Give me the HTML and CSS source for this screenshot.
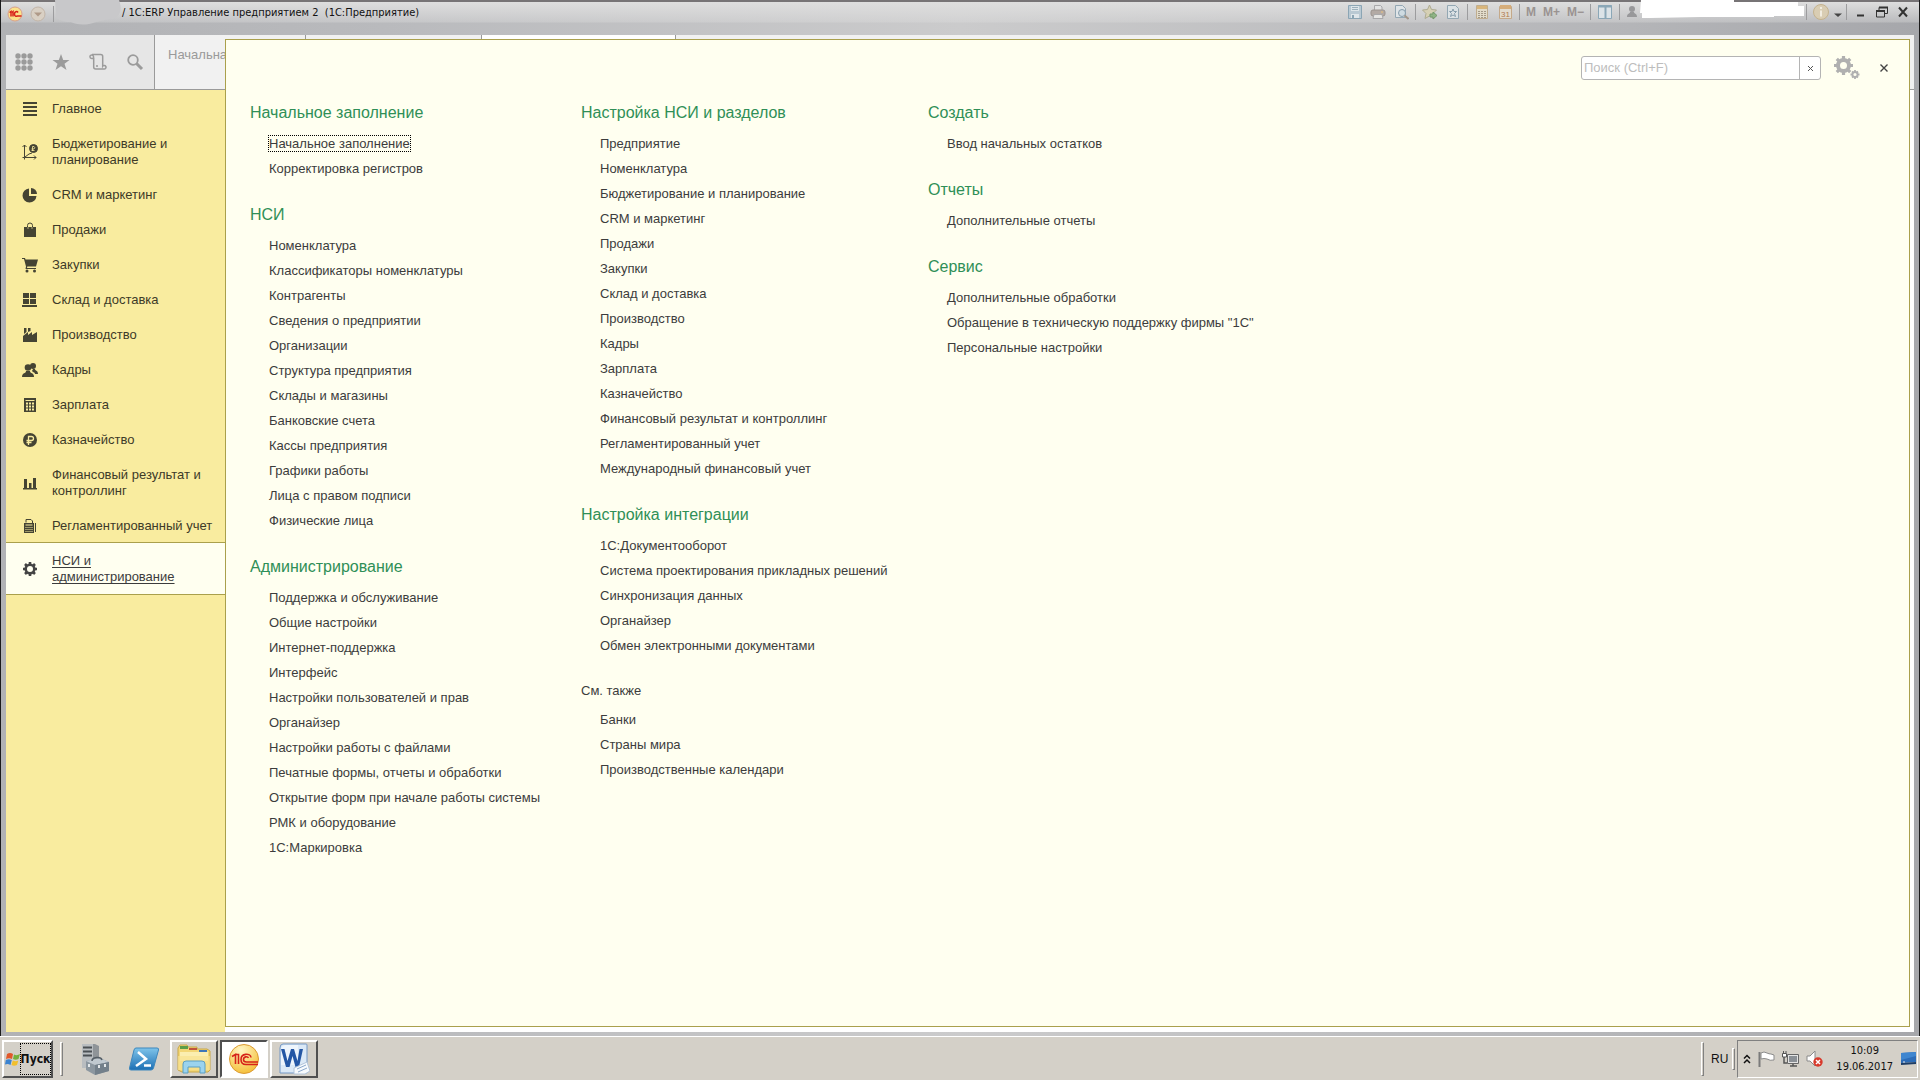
FILE: index.html
```html
<!DOCTYPE html>
<html lang="ru">
<head>
<meta charset="utf-8">
<title>1С:ERP Управление предприятием 2</title>
<link rel="stylesheet" href="styles.css">
</head>
<body>
<div class="window">
  <header class="titlebar">
    <button class="tb-btn" aria-label="Главное меню">
      <svg width="16" height="16" viewBox="0 0 16 16"><circle cx="8" cy="8" r="7" fill="#fbe28a" stroke="#d9a08a"/><path d="M2.500 6.500 4 5.500V10.500M6 10.500V5.500L4.800 6.500M11 6.500C10 4.800 7.500 5.500 7.500 8S9 10.500 10.500 10H14.500" fill="none" stroke="#d8241c" stroke-width="1.500"/></svg>
    </button>
    <button class="tb-btn tb-drop" aria-label="Меню">
      <svg width="16" height="16" viewBox="0 0 16 16"><circle cx="8" cy="8" r="7" fill="#d9d0c4" stroke="#c2b5a8"/><path d="M4 6.500h8L8 10.500z" fill="#b09a88"/></svg>
    </button>
    <span class="tb-sep"></span>
    <svg class="smudge" width="67" height="28" viewBox="0 0 67 28"><path d="M0 0H64C67 8 66 15 60 18 50 20 44 21 38 23 28 26 20 24 16 22 9 22 2 20 1 16z" fill="#c8c8ca"/></svg>
    <h1 class="title">/ 1С:ERP Управление предприятием 2&nbsp; (1С:Предприятие)</h1>
    <div class="tb-tools">
      <button class="tb-btn" aria-label="Сохранить"><svg width="16" height="16" viewBox="0 0 16 16"><path d="M1.500 1.500h13v13h-13z" fill="#b9c9d3" stroke="#8ba5b4"/><path d="M4 2h8v5H4z" fill="#dde5e9"/><path d="M5 3.500h6M5 5.500h6" stroke="#9cb0bb"/><path d="M4 10h8v4H4z" fill="#dfe6ea"/><path d="M5 11h2v3H5z" fill="#8ba5b4"/></svg></button>
      <button class="tb-btn" aria-label="Печать"><svg width="16" height="16" viewBox="0 0 16 16"><path d="M4.500 6V1.500h6L12 3v3" fill="#e2e2e2" stroke="#a8a8aa"/><rect x="1" y="6" width="14" height="6" rx="2" fill="#b3aaa5" stroke="#9b938f"/><path d="M4 10.500h8l1 4H3z" fill="#e6e5e3" stroke="#a8a8aa"/><path d="M11 8h2" stroke="#e9c07a"/></svg></button>
      <button class="tb-btn" aria-label="Предварительный просмотр"><svg width="16" height="16" viewBox="0 0 16 16"><path d="M2.500 1.500h7l3 3v9h-10z" fill="#dfe4e7" stroke="#93a7b3"/><circle cx="9" cy="9" r="3.500" fill="#cfdbe1" stroke="#879dab"/><path d="m11.500 11.500 4 3.500" stroke="#a39689" stroke-width="2"/></svg></button>
      <span class="tb-sep"></span>
      <button class="tb-btn" aria-label="В избранное"><svg width="16" height="16" viewBox="0 0 16 16"><path d="m7.500 1 2 4.500 5 .5-3.500 3.500 1 5-4.500-2.500L3 14.500 4 9.500.500 6l5-.5z" fill="#d6d0b4" stroke="#aeab91"/><path d="M8 10h3V8l4 3.500L11 15v-2H8z" fill="#8fb384" stroke="#759a6c"/></svg></button>
      <button class="tb-btn" aria-label="Избранное"><svg width="16" height="16" viewBox="0 0 16 16"><path d="M2.500 1.500h8l3 3v10h-11z" fill="#dce2e5" stroke="#93a7b3"/><path d="m8 5 1 2.500h2.500l-2 2 1 3L8 11l-2.500 1.500 1-3-2-2H7z" fill="none" stroke="#879dab"/></svg></button>
      <span class="tb-sep"></span>
      <button class="tb-btn" aria-label="Калькулятор"><svg width="16" height="16" viewBox="0 0 16 16"><path d="M2.500 1.500h11v13h-11z" fill="#e2dccb" stroke="#c0ad8e"/><path d="M3 2h10v3H3z" fill="#d9b67c"/><path d="M4 7.500h8M4 9.500h8M4 11.500h8M4 13.500h8" stroke="#a49a89" stroke-dasharray="2 1"/></svg></button>
      <button class="tb-btn" aria-label="Календарь"><svg width="16" height="16" viewBox="0 0 16 16"><path d="M2.500 2.500h12v12h-12z" fill="#e2dccf" stroke="#c4a98a"/><path d="M3 1h11v4H3z" fill="#d6ad7a"/><text x="4" y="13" class="tiny">31</text></svg></button>
      <span class="tb-sep"></span>
      <button class="tb-btn tb-m">M</button>
      <button class="tb-btn tb-m">M+</button>
      <button class="tb-btn tb-m">M−</button>
      <span class="tb-sep"></span>
      <button class="tb-btn" aria-label="Окна"><svg width="16" height="16" viewBox="0 0 16 16"><path d="M1.500 1.500h13v13h-13z" fill="#dce3e7" stroke="#8ba7b7"/><path d="M1 2.500h14M8.500 2v12" stroke="#8ba7b7" stroke-width="2"/></svg></button>
      <span class="tb-sep"></span>
      <button class="tb-btn" aria-label="Пользователь"><svg width="12" height="16" viewBox="0 0 12 16"><circle cx="6" cy="5" r="3" fill="#98989a"/><path d="M1 13c0-4 3-3 3-5h4c0 2 3 1 3 5z" fill="#98989a"/></svg></button>
      <svg class="mask" width="165" height="20" viewBox="0 0 165 20"><path d="M1 0H94V2H158V6H164V16H134V17H60L10 18H2V13H0z" fill="#fff"/></svg>
      <span class="tb-sep"></span>
      <button class="tb-btn" aria-label="Справка"><svg width="16" height="16" viewBox="0 0 16 16"><circle cx="8" cy="8" r="7.500" fill="#d9cdb3" stroke="#c4b28e"/><path d="M8 3v2M8 6.500v6" stroke="#f2ede0" stroke-width="2"/></svg></button>
      <button class="tb-btn tb-more" aria-label="Ещё"><svg width="10" height="16" viewBox="0 0 10 16"><path d="M1 9.500h8L5 13z" fill="#444"/></svg></button>
      <span class="tb-sep"></span>
      <button class="tb-btn tb-win" aria-label="Свернуть"><svg width="12" height="12" viewBox="0 0 12 12"><path d="M2 9.500h7" stroke="#333" stroke-width="2"/></svg></button>
      <button class="tb-btn tb-win" aria-label="Развернуть"><svg width="12" height="12" viewBox="0 0 12 12"><path d="M3 4V1.500h8.500v6H9M.500 5h8v6h-8z" fill="none" stroke="#333"/><path d="M3 1.500h9M0 5h9" stroke="#333" stroke-width="2"/></svg></button>
      <button class="tb-btn tb-win" aria-label="Закрыть"><svg width="12" height="12" viewBox="0 0 12 12"><path d="m2 1.500 8 9m0-9-8 9" stroke="#333" stroke-width="2"/></svg></button>
    </div>
  </header>

  <div class="workspace">
    <div class="strip">
      <div class="tools">
        <button class="tool" aria-label="Разделы"><svg width="18" height="18" viewBox="0 0 18 18" fill="#9b9b9b"><circle cx="3" cy="3" r="2.700"/><circle cx="9" cy="3" r="2.700"/><circle cx="15" cy="3" r="2.700"/><circle cx="3" cy="9" r="2.700"/><circle cx="9" cy="9" r="2.700"/><circle cx="15" cy="9" r="2.700"/><circle cx="3" cy="15" r="2.700"/><circle cx="9" cy="15" r="2.700"/><circle cx="15" cy="15" r="2.700"/></svg></button>
        <button class="tool" aria-label="Избранное"><svg width="18" height="18" viewBox="0 0 18 18" fill="#9b9b9b"><path d="M9 1l2.200 6H17.500l-5 3.800 2 6.200L9 13.300 3.500 17l2-6.200L.500 7h6.300z"/></svg></button>
        <button class="tool" aria-label="История"><svg width="18" height="18" viewBox="0 0 18 18" fill="none" stroke="#9b9b9b" stroke-width="1.500"><path d="M4.500 5.500V3.500a1.800 1.800 0 1 0-1.800 2h2v8.500c0 1.500 1 2 2 2h8.500a1.800 1.800 0 1 0-1.500-2.800V3.500c0-1.500-1-2-2-2H3M7 13h2"/></svg></button>
        <button class="tool" aria-label="Поиск"><svg width="18" height="18" viewBox="0 0 18 18" fill="none" stroke="#9b9b9b"><circle cx="7" cy="7" r="4.800" stroke-width="1.800"/><path d="m10.500 10.500 5.500 5.500" stroke-width="3"/></svg></button>
      </div>
      <div class="tab">Начальная страница</div>
      <div class="tab tab-mid"></div>
      <div class="tab tab-active"></div>
      <div class="tab-rest"></div>
    </div>

    <nav class="sections">
      <a href="#"><svg width="16" height="16" viewBox="0 0 16 16"><path d="M1 2h14M1 6h14M1 10h14M1 14h14" stroke="#454433" stroke-width="2"/></svg><span>Главное</span></a>
      <a href="#"><svg width="16" height="16" viewBox="0 0 16 16" fill="none" stroke="#454433"><path d="M2.500 1v12.500H14M.500 3l2-2 2 2M12 11.500l2 2-2 2M.500 13.500h2v2M3 13l4-3 3-1"/><circle cx="11.500" cy="4.500" r="4" fill="#454433"/><path d="M10.500 7V2.500h1.500q1.500 1 0 2.500H9.500M9.500 6.500h3" stroke="#f9ec9f" stroke-width=".8"/></svg><span>Бюджетирование и планирование</span></a>
      <a href="#"><svg width="16" height="16" viewBox="0 0 16 16" fill="#454433"><path d="M7 1.500V9h7.500A7 7 0 1 1 7 1.500z"/><path d="M9 1a6 6 0 0 1 6 6H9z"/></svg><span>CRM и маркетинг</span></a>
      <a href="#"><svg width="16" height="16" viewBox="0 0 16 16"><path d="M2 5h12v10H2z" fill="#454433"/><path d="M5.500 7V3.500q0-2.500 2.500-2.500t2.500 2.500V7" fill="none" stroke="#454433"/><path d="M6 5v2M10 5v2" stroke="#f9ec9f" stroke-width=".6"/></svg><span>Продажи</span></a>
      <a href="#"><svg width="16" height="16" viewBox="0 0 16 16" fill="#454433"><path d="M0 1h3l.5 1.500H16L14 9.500H5.300L5 11h9v1H3.500l.5-2.500L2 2H0z"/><circle cx="5" cy="14" r="1.500"/><circle cx="12.500" cy="14" r="1.500"/></svg><span>Закупки</span></a>
      <a href="#"><svg width="16" height="16" viewBox="0 0 16 16" fill="#454433"><path d="M1 1h6v5H1zM8 1h6v5H8zM1 7h6v5H1zM8 7h6v5H8zM0 13h15v2H0z"/></svg><span>Склад и доставка</span></a>
      <a href="#"><svg width="16" height="16" viewBox="0 0 16 16" fill="#454433"><path d="M1 15V9l5-4v3l4-3v3l5-3v10zM2 1h2.500v4L2 7zM6 1h2.500v3L6 5z"/></svg><span>Производство</span></a>
      <a href="#"><svg width="16" height="16" viewBox="0 0 16 16" fill="#454433"><circle cx="11" cy="4" r="3"/><path d="M11 7h2c0 2 3 1 3 5h-3c0-2-3-2-3-3z"/><circle cx="6" cy="5.500" r="3.300"/><path d="M0 15c0-5 4-3 4-6h4c0 3 4 1 4 6z"/></svg><span>Кадры</span></a>
      <a href="#"><svg width="16" height="16" viewBox="0 0 16 16"><path d="M2 1h12v14H2z" fill="#454433"/><path d="M3.500 3.500h9" stroke="#f9ec9f"/><path d="M4 6.500h9M4 9.500h9M4 12.500h9" stroke="#f9ec9f" stroke-width="2" stroke-dasharray="2 1"/></svg><span>Зарплата</span></a>
      <a href="#"><svg width="16" height="16" viewBox="0 0 16 16"><circle cx="8" cy="8" r="7" fill="#454433"/><path d="M6.500 13V4.500h3q2 0 2 2t-2 2H4.500M4.500 10.500h5" fill="none" stroke="#f9ec9f" stroke-width="1.300"/></svg><span>Казначейство</span></a>
      <a href="#"><svg width="16" height="16" viewBox="0 0 16 16" fill="#454433"><path d="M1 13h14v1.500H1zM2 4h3v9H2zM7 8h2.500v5H7zM11 3h3v10h-3z"/></svg><span>Финансовый результат и контроллинг</span></a>
      <a href="#"><svg width="16" height="16" viewBox="0 0 16 16"><path d="M2 5h10v10H2zM13 5h1v9h-1z" fill="#454433"/><path d="M4 4.500v-3h5l1.500 1.500v2" fill="none" stroke="#454433"/><path d="M3.500 7h7" stroke="#f9ec9f"/><path d="M3.500 9.500h8M3.500 11.500h8M3.500 13.500h8" stroke="#f9ec9f" stroke-dasharray="1 1"/></svg><span>Регламентированный учет</span></a>
      <a href="#" class="current"><svg width="16" height="16" viewBox="0 0 16 16"><circle cx="8" cy="8" r="4.300" fill="none" stroke="#444" stroke-width="2.600"/><g stroke="#444" stroke-width="2.600"><path d="M8 1v2M8 13v2M1 8h2M13 8h2M3 3l1.500 1.500M11.500 11.500 13 13M3 13l1.500-1.500M11.500 4.500 13 3"/></g></svg><span>НСИ и администрирование</span></a>
    </nav>

    <main class="panel">
      <div class="panel-tools">
        <div class="search">
          <input type="text" placeholder="Поиск (Ctrl+F)" aria-label="Поиск">
          <button aria-label="Очистить"><svg width="7" height="7" viewBox="0 0 7 7"><path d="m1 1 5 5m0-5-5 5" stroke="#555"/></svg></button>
        </div>
        <button class="plain gear" aria-label="Настройки"><svg width="26" height="24" viewBox="0 0 26 24" fill="none" stroke="#b0b0b0"><circle cx="9.500" cy="9.500" r="5.500" stroke-width="4"/><path d="M9.500 0v4M9.500 15v4M0 9.500h4M15 9.500h4M2.800 2.800l3 3M13.200 13.200l3 3M2.800 16.200l3-3M13.200 5.800l3-3" stroke-width="3.200"/><circle cx="21" cy="18.500" r="2.500" stroke-width="1.800"/><path d="M21 14v2M21 21v2M16.500 18.500h2M23.500 18.500h2M18 15.500l1 1M23 20.500l1 1M18 21.500l1-1M23 16.500l1-1" stroke-width="1.800"/></svg></button>
        <button class="plain" aria-label="Закрыть"><svg width="8" height="8" viewBox="0 0 8 8"><path d="m.5.500 7 7m0-7-7 7" stroke="#444" stroke-width="1.400"/></svg></button>
      </div>
      <div class="columns">
        <div class="column">
          <section>
            <h2>Начальное заполнение</h2>
            <ul>
              <li><a href="#" class="focused">Начальное заполнение</a></li>
              <li><a href="#">Корректировка регистров</a></li>
            </ul>
          </section>
          <section>
            <h2>НСИ</h2>
            <ul>
              <li><a href="#">Номенклатура</a></li>
              <li><a href="#">Классификаторы номенклатуры</a></li>
              <li><a href="#">Контрагенты</a></li>
              <li><a href="#">Сведения о предприятии</a></li>
              <li><a href="#">Организации</a></li>
              <li><a href="#">Структура предприятия</a></li>
              <li><a href="#">Склады и магазины</a></li>
              <li><a href="#">Банковские счета</a></li>
              <li><a href="#">Кассы предприятия</a></li>
              <li><a href="#">Графики работы</a></li>
              <li><a href="#">Лица с правом подписи</a></li>
              <li><a href="#">Физические лица</a></li>
            </ul>
          </section>
          <section>
            <h2>Администрирование</h2>
            <ul>
              <li><a href="#">Поддержка и обслуживание</a></li>
              <li><a href="#">Общие настройки</a></li>
              <li><a href="#">Интернет-поддержка</a></li>
              <li><a href="#">Интерфейс</a></li>
              <li><a href="#">Настройки пользователей и прав</a></li>
              <li><a href="#">Органайзер</a></li>
              <li><a href="#">Настройки работы с файлами</a></li>
              <li><a href="#">Печатные формы, отчеты и обработки</a></li>
              <li><a href="#">Открытие форм при начале работы системы</a></li>
              <li><a href="#">РМК и оборудование</a></li>
              <li><a href="#">1С:Маркировка</a></li>
            </ul>
          </section>
        </div>
        <div class="column">
          <section>
            <h2>Настройка НСИ и разделов</h2>
            <ul>
              <li><a href="#">Предприятие</a></li>
              <li><a href="#">Номенклатура</a></li>
              <li><a href="#">Бюджетирование и планирование</a></li>
              <li><a href="#">CRM и маркетинг</a></li>
              <li><a href="#">Продажи</a></li>
              <li><a href="#">Закупки</a></li>
              <li><a href="#">Склад и доставка</a></li>
              <li><a href="#">Производство</a></li>
              <li><a href="#">Кадры</a></li>
              <li><a href="#">Зарплата</a></li>
              <li><a href="#">Казначейство</a></li>
              <li><a href="#">Финансовый результат и контроллинг</a></li>
              <li><a href="#">Регламентированный учет</a></li>
              <li><a href="#">Международный финансовый учет</a></li>
            </ul>
          </section>
          <section>
            <h2>Настройка интеграции</h2>
            <ul>
              <li><a href="#">1С:Документооборот</a></li>
              <li><a href="#">Система проектирования прикладных решений</a></li>
              <li><a href="#">Синхронизация данных</a></li>
              <li><a href="#">Органайзер</a></li>
              <li><a href="#">Обмен электронными документами</a></li>
            </ul>
          </section>
          <section class="see-also">
            <h2>См. также</h2>
            <ul>
              <li><a href="#">Банки</a></li>
              <li><a href="#">Страны мира</a></li>
              <li><a href="#">Производственные календари</a></li>
            </ul>
          </section>
        </div>
        <div class="column">
          <section>
            <h2>Создать</h2>
            <ul>
              <li><a href="#">Ввод начальных остатков</a></li>
            </ul>
          </section>
          <section>
            <h2>Отчеты</h2>
            <ul>
              <li><a href="#">Дополнительные отчеты</a></li>
            </ul>
          </section>
          <section>
            <h2>Сервис</h2>
            <ul>
              <li><a href="#">Дополнительные обработки</a></li>
              <li><a href="#">Обращение в техническую поддержку фирмы "1С"</a></li>
              <li><a href="#">Персональные настройки</a></li>
            </ul>
          </section>
        </div>
      </div>
    </main>
  </div>
</div>

<footer class="taskbar">
  <button class="start">
    <svg width="16" height="16" viewBox="0 0 16 16"><path d="M2 3q3-2 6 0L7 8Q4 6.500 1 8z" fill="#e2582a"/><path d="M9 3.500q3 1.500 6-.5l-1.500 5q-3 1.500-5.500 0z" fill="#74b03c"/><path d="M.800 9q3-1.500 6 0l-1.300 5Q3 12.500 0 13.500z" fill="#3c83d0"/><path d="M7.800 9.500q3 1.500 5.500 0L12 14q-3 1.500-5.500 0z" fill="#f2bf2c"/></svg>
    <span>Пуск</span>
  </button>
  <span class="grip"></span>
  <div class="launch">
    <button class="task quick" aria-label="Диспетчер сервера"><svg width="32" height="32" viewBox="0 0 32 32"><path d="M4 1h13l4 2v22H4z" fill="#8f9498"/><path d="M4 1h11v24H4z" fill="#b9bdc0"/><path d="M5 4.500h9M5 8.500h9M5 12.500h9" stroke="#4b5054" stroke-width="2"/><path d="M8 18 22 15 31 19V28L17 32 8 27z" fill="#8c97a0"/><path d="M8 18 17 22 31 19 22 15z" fill="#c0c9d0"/><path d="M17 22v10L31 28V19z" fill="#73808b"/><path d="M14 18c0-4 9-5 10-1" fill="none" stroke="#555e66" stroke-width="1.500"/><path d="M11 21v3M21 22v3M27 21v3" stroke="#e4e8ea" stroke-width="2"/></svg></button>
    <button class="task quick" aria-label="PowerShell"><svg width="32" height="32" viewBox="0 0 32 32"><defs><linearGradient id="ps" x2="0" y2="1"><stop stop-color="#7fc4ea"/><stop offset="1" stop-color="#1c6fb4"/></linearGradient></defs><path d="M8 5H29q2 0 1.500 2L25.500 25q-.5 2-2.500 2H3q-2 0-1.500-2L6 7q.5-2 2-2z" fill="url(#ps)" stroke="#3d87bd"/><path d="m10 9 8 7-10 7M16 22.500h7" fill="none" stroke="#fff" stroke-width="2.500"/></svg></button>
    <button class="task" aria-label="Проводник"><svg width="34" height="32" viewBox="0 0 34 32"><path d="M1 5V27l4 2h26l2-2V8l-3-2H20V4h-9l-1-2H3z" fill="#f3d777" stroke="#c9a747"/><path d="M3 3h8v3H3z" fill="#5b9d48"/><path d="M12 5h8v2h-8z" fill="#c0533b"/><path d="M22 7h8v2h-8z" fill="#3f77b8"/><path d="M3 9h28v9H3z" fill="#fbeeb0"/><path d="M1 13h32v14H1z" fill="#f8e391" opacity=".7"/><path d="M6 30V21q0-3 3-3H25q3 0 3 3v9H23V24H11v6z" fill="#9bd3ee" stroke="#5b9fc4"/></svg></button>
    <button class="task pressed" aria-label="1С:Предприятие"><svg width="32" height="32" viewBox="0 0 32 32"><defs><radialGradient id="oc" cx=".4" cy=".2" r=".9"><stop stop-color="#fff6c4"/><stop offset="1" stop-color="#f4ba2b"/></radialGradient></defs><circle cx="16" cy="16" r="14.500" fill="url(#oc)" stroke="#dc9b33"/><path d="M4 13.500 7.500 11.500V21M10.500 21V11.500H8M23 14.500C22.500 10 13 10 13 16.500c0 3 2 5 5 5H30M20.500 15c-1-2-5-1.500-5 1.500 0 1.500 1 2.500 3 2.500H30" fill="none" stroke="#d62319" stroke-width="1.600"/></svg></button>
    <button class="task" aria-label="Word"><svg width="32" height="32" viewBox="0 0 32 32"><path d="M5 1H28q1 0 1 1v28H2V5q0-4 3-4z" fill="#dbe9f7" stroke="#7397c4"/><path d="M3 6Q4 2 8 2H20v20H3z" fill="#eef5fc"/><path d="M3 6h3.500l3 12 3.500-12h3l3.500 12 2-12H25l-4 18h-3.500L14.500 13l-3 11H8z" fill="#2457a5"/><path d="m16 25 13-6 3 9-5 3H16z" fill="#f7fafd" stroke="#b3c5da"/><path d="m19 26 9-4M20 29l9-4" stroke="#8aa8cc"/></svg></button>
  </div>
  <span class="grip"></span>
  <span class="lang">RU</span>
  <span class="grip small"></span>
  <div class="tray">
    <button class="plain" aria-label="Показать скрытые значки"><svg width="8" height="10" viewBox="0 0 8 10" fill="none" stroke="#111" stroke-width="1.500"><path d="m1 4.500 3-3 3 3M1 9l3-3 3 3"/></svg></button>
    <button class="plain" aria-label="Центр поддержки"><svg width="17" height="18" viewBox="0 0 17 18"><path d="M1.500 2v15" stroke="#7b7b7b" stroke-width="2"/><path d="M3 3q3-2 6 0 2 1 4 1l3 1v5q-4 1-7-1-3-1-6 0z" fill="#fff" stroke="#8b8b8b"/></svg></button>
    <button class="plain" aria-label="Сеть"><svg width="17" height="18" viewBox="0 0 17 18"><path d="M5.500 4.500h11v9h-11z" fill="#e4e4e4" stroke="#666"/><path d="M7 6h8v6H7z" fill="#8b9096"/><path d="M8 16h7M2 7v6h3M11 14v2" stroke="#555" stroke-width="1.500" fill="none"/><path d="M.500 3.500h4V7h-4zM1.500 1v2M4 1v2" fill="#fff" stroke="#555"/></svg></button>
    <button class="plain" aria-label="Громкость"><svg width="17" height="18" viewBox="0 0 17 18"><path d="M1 6h3l5-5v15l-5-5H1z" fill="#fff" stroke="#8a8a8a"/><circle cx="12" cy="12" r="4.700" fill="#d8392b"/><path d="m10 10 4 4m0-4-4 4" stroke="#fff" stroke-width="1.500"/></svg></button>
    <div class="clock"><time>10:09</time><span>19.06.2017</span></div>
    <button class="plain" aria-label="Показать рабочий стол"><svg width="16" height="14" viewBox="0 0 16 14"><path d="M1 1 16 0V10L1 11z" fill="#2c6cb8"/><path d="M1 1 16 0V4L1 8z" fill="#3f86d0"/><path d="M1 11 16 10v2L1 13z" fill="#1d3d66"/><path d="M3 10h2" stroke="#e8e8e8"/></svg></button>
  </div>
</footer>
</body>
</html>
```
FILE: styles.css
```css
* { box-sizing: border-box; }

body {
  margin: 0;
  min-height: 100vh;
  display: flex;
  flex-direction: column;
  font: 13px/16px "Liberation Sans", Arial, sans-serif;
  color: #3c3c3c;
  background: #d4d0c8;
}

button {
  padding: 0;
  border: 0;
  background: none;
  font: inherit;
  color: inherit;
}

a { color: inherit; text-decoration: none; }
svg { display: block; flex: none; }
h1, h2, ul { margin: 0; padding: 0; font-weight: normal; }
ul { list-style: none; }

/* Window frame */
.window {
  flex: 1;
  display: flex;
  flex-direction: column;
  padding: 0 5px 4px;
  border: solid #1b1b1b;
  border-width: 0 1px;
  background: linear-gradient(90deg, #b1b2b5, #b9babd 20%, #cbcbcc 50%, #b4b5b8 85%, #a6a7ab);
}

.titlebar {
  display: flex;
  align-items: flex-start;
  height: 35px;
  margin: 0 -5px;
  padding: 4px 5px 0 6px;
  border-top: 2px solid #777476;
  background: linear-gradient(#dedede, rgba(222, 222, 222, .35) 20px, transparent 21px);
}

.tb-btn { display: flex; align-items: center; height: 16px; }
.tb-drop { margin-left: 7px; }
.tb-sep { width: 1px; height: 16px; background: #9c9c9e; }
.titlebar > .tb-sep { margin-left: 7px; }
.smudge { margin: -6px 0 0 1px; }
.title {
  font: 11px/14px "DejaVu Sans Condensed", "Noto Sans", sans-serif;
  color: #111;
  white-space: nowrap;
}
.tb-tools {
  display: flex;
  align-items: center;
  gap: 7px;
  margin: -2px 5px 0 auto;
}
.tb-tools .tb-sep { margin: 0 -1px; }
.tb-m { font-size: 12px; font-weight: bold; color: #9a9391; }
.tb-more { margin: 0 -3px; }
.tb-win { margin-left: 2px; }
.tiny { font: 8px "Liberation Sans", sans-serif; fill: #b07a50; }
.mask { margin: -4px -5px 0; }

/* Workspace */
.workspace {
  flex: 1;
  display: grid;
  grid-template-columns: 219px 1fr;
  grid-template-rows: 55px 1fr;
  background: #fff;
}

.strip {
  grid-area: 1 / 1 / 2 / 3;
  display: flex;
  border-bottom: 1px solid #9a9a9a;
  background: #f1f1f1;
}
.tools {
  display: flex;
  align-items: center;
  gap: 19px;
  width: 149px;
  padding-left: 9px;
  border-right: 1px solid #9a9a9a;
  background: #e6e6e6;
}
.tab {
  width: 151px;
  padding: 12px 13px;
  border-right: 1px solid #9a9a9a;
  color: #9a9a9a;
  white-space: nowrap;
}
.tab-mid { width: 176px; }
.tab-active { width: 194px; background: #fff; }
.tab-rest { flex: 1; }

.sections {
  grid-area: 2 / 1;
  padding-top: 1px;
  background: #f9ec9f;
  color: #3d3a28;
}
.sections a {
  display: flex;
  align-items: center;
  gap: 14px;
  padding: 10px 8px 9px 16px;
}
.sections .current {
  margin-top: -1px;
  border: solid #aaa04c;
  border-width: 1px 0;
  background: #fffff0;
  color: #3c3c3c;
  text-decoration: underline 1px;
  text-underline-offset: 2px;
  text-decoration-skip-ink: none;
}

/* Function menu laid over the tab strip */
.panel {
  grid-area: 1 / 2 / 3 / 3;
  z-index: 1;
  margin: 4px 4px 5px 0;
  padding: 16px 21px 16px 24px;
  border: 1px solid #aaa04c;
  background: #fffff0;
}
.panel-tools {
  display: flex;
  align-items: center;
  justify-content: flex-end;
}
.search {
  display: flex;
  width: 240px;
  height: 24px;
  border: 1px solid #b4b4b4;
  border-radius: 3px;
  background: #fff;
}
.search input {
  flex: 1;
  min-width: 0;
  padding: 0 2px;
  border: 0;
  background: none;
  font: inherit;
}
.search input::placeholder { color: #bdbdbd; }
.search button {
  display: grid;
  place-items: center;
  width: 21px;
  border-left: 1px solid #b4b4b4;
}
.plain { display: flex; align-items: center; }
.gear { margin: 0 20px 0 13px; }

.columns {
  display: grid;
  grid-template-columns: 331px 347px 1fr;
  padding-top: 22px;
}
.column { display: flex; flex-direction: column; gap: 23px; }
.column h2 {
  padding-bottom: 7px;
  font-size: 16px;
  line-height: 22px;
  color: #2f8f57;
}
.column ul { padding-left: 19px; }
.column li { line-height: 25px; white-space: nowrap; }
.see-also h2 {
  padding-bottom: 6px;
  font-size: 13px;
  line-height: 20px;
  color: #3c3c3c;
}
.focused { outline: 1px dotted #000; }

/* Taskbar */
.taskbar {
  display: flex;
  align-items: center;
  height: 44px;
  padding: 0 2px;
  border-top: 1px solid #fff;
  background: #d4d0c8;
  color: #111;
}
.start, .task {
  display: flex;
  align-items: center;
  justify-content: center;
  height: 38px;
  border: 2px solid;
  border-color: #fff #505050 #505050 #fff;
}
.start { width: 51px; font: bold 12px/16px "DejaVu Sans Condensed", sans-serif; }
.start span { padding: 7px 0; outline: 1px dotted #000; }
.grip {
  width: 3px;
  height: 34px;
  margin: 0 7px;
  border: 1px solid;
  border-color: #fff #808080 #808080 #fff;
}
.grip.small { height: 22px; margin: 0 2px 0 4px; }
.launch { display: flex; gap: 2px; margin-right: auto; }
.task { width: 48px; }
.quick { border-color: transparent; }
.pressed {
  border-color: #505050 #fff #fff #505050;
  background: #fff;
}
.lang { font-size: 12px; }
.tray {
  display: flex;
  align-items: center;
  gap: 7px;
  height: 38px;
  padding: 0 1px 0 5px;
  border: 1px solid;
  border-color: #808080 #fff #fff #808080;
}
.clock {
  display: flex;
  flex-direction: column;
  align-items: center;
  padding-left: 6px;
  font: 11px/16px "DejaVu Sans Condensed", sans-serif;
}
```
